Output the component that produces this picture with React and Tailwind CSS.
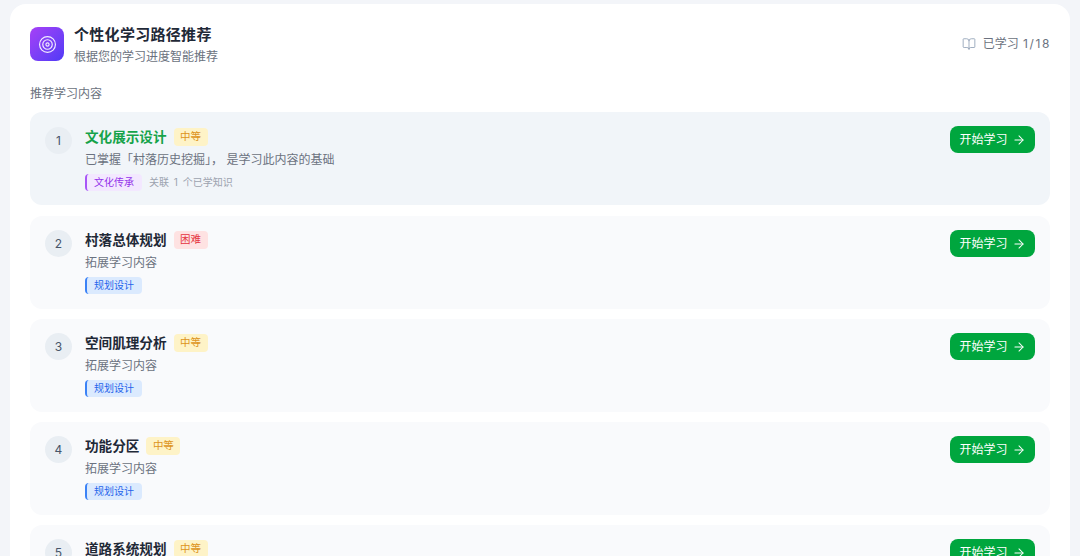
import React from "react";
import { ArrowRight, BookOpen, Target } from "lucide-react";

const items = [
  { n: 1, title: "文化展示设计", level: "中等", desc: "已掌握「村落历史挖掘」， 是学习此内容的基础", tag: "文化传承", extra: "关联 1 个已学知识", active: true },
  { n: 2, title: "村落总体规划", level: "困难", desc: "拓展学习内容", tag: "规划设计" },
  { n: 3, title: "空间肌理分析", level: "中等", desc: "拓展学习内容", tag: "规划设计" },
  { n: 4, title: "功能分区", level: "中等", desc: "拓展学习内容", tag: "规划设计" },
  { n: 5, title: "道路系统规划", level: "中等", desc: "拓展学习内容", tag: "规划设计" },
];

function Row({ n, title, level, desc, tag, extra, active }) {
  return (
    <div className={`shrink-0 h-[93px] rounded-xl flex items-start pt-[14px] pl-[15px] pr-[15px] ${active ? "bg-[#f1f5f9] mb-[1px]" : "bg-[#f9fafc]"}`}>
      <div className={`w-[27px] h-[27px] rounded-full bg-[#e9eef3] flex items-center justify-center text-[12px] font-normal text-[#475569] shrink-0 ${active ? "mt-[1px]" : ""}`}>{n}</div>
      <div className="ml-[13px] flex-1 min-w-0">
        <div className={`flex items-center h-[20px] ${active ? "mt-[1px]" : ""}`}>
          <span className={`text-[13.6px] leading-[20px] font-semibold ${active ? "text-[#16a34a]" : "text-[#1f2937]"}`}>{title}</span>
          <span className={`ml-[7px] h-[18px] w-[34px] rounded flex items-center justify-center text-[10.5px] ${level === "困难" ? "bg-[#fee2e2] text-[#e5343f]" : "bg-[#fef3c7] text-[#dd9420]"}`}>{level}</span>
        </div>
        <div className={`text-[12px] leading-[20px] text-[#6b7280] ${active ? "mt-[3px]" : "mt-[3px]"}`}>{desc}</div>
        <div className="mt-[4px] flex items-center h-[17px]">
          <span className={`h-[17px] w-[57px] flex items-center pl-[7px] rounded-[4px] border-l-2 text-[10px] ${tag === "文化传承" ? "bg-[#f3e8ff] border-[#a855f7] text-[#9333ea]" : "bg-[#dbeafe] border-[#3b82f6] text-[#2563eb]"}`}>{tag}</span>
          {extra && <span className="ml-[7px] text-[10px] text-[#9ca3af] [word-spacing:2px]">{extra}</span>}
        </div>
      </div>
      <button className="shrink-0 w-[85px] h-[27px] rounded-lg bg-[#00a63e] text-white text-[12px] font-normal flex items-center justify-center gap-[4px]">
        开始学习
        <ArrowRight size={14} strokeWidth={1.75} />
      </button>
    </div>
  );
}

export default function App() {
  return (
    <div className="h-[556px] overflow-hidden bg-[#f3f5f9] pt-[4px] px-[10px]" style={{ fontFamily: '"Inter", "Noto Sans CJK SC", sans-serif' }}>
      <div className="bg-white rounded-t-2xl h-[552px] overflow-hidden px-[20px] pt-[23px]">
        <div className="flex items-start justify-between h-[35px]">
          <div className="flex items-start">
            <div className="w-[34px] h-[34px] rounded-lg bg-gradient-to-br from-[#a63ff7] to-[#4f39f6] flex items-center justify-center">
              <Target size={19} strokeWidth={1.5} className="text-white opacity-90" />
            </div>
            <div className="ml-[10px] -mt-[1px]">
              <div className="text-[15px] leading-[18px] font-semibold text-[#1f2937] tracking-[0.3px]">个性化学习路径推荐</div>
              <div className="mt-[5px] text-[12px] leading-[16px] text-[#6b7280]">根据您的学习进度智能推荐</div>
            </div>
          </div>
          <div className="flex items-center gap-[7px] mt-[9px] -mr-[1px] text-[12px] leading-[16px] text-[#6b7280]">
            <BookOpen size={14} strokeWidth={1.5} className="text-[#94a3b8]" />
            <span className="[word-spacing:1px]">已学习 <span className="tracking-[1.6px]">1/18</span></span>
          </div>
        </div>
        <div className="mt-[24px] text-[12px] leading-[16px] text-[#6b7280]">推荐学习内容</div>
        <div className="mt-[10px] flex flex-col gap-[10px]">
          {items.map((it) => <Row key={it.n} {...it} />)}
        </div>
      </div>
    </div>
  );
}
